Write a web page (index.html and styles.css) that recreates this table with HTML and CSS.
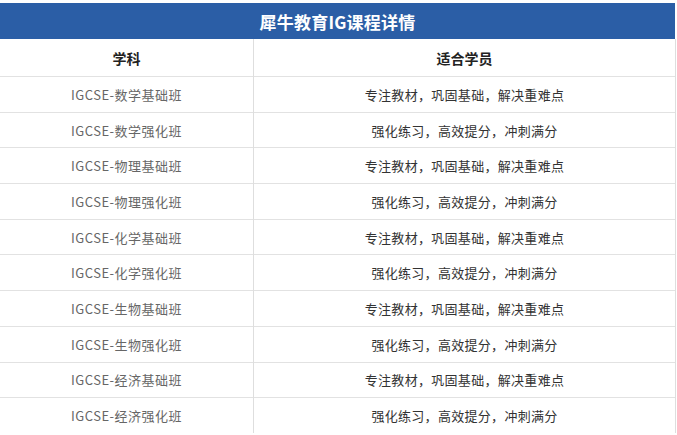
FILE: index.html
```html
<!DOCTYPE html>
<html lang="zh">
<head>
<meta charset="utf-8">
<title>犀牛教育IG课程详情</title>
<link rel="stylesheet" href="styles.css">
</head>
<body>
<div class="sheet">
  <div class="title">犀牛教育IG课程详情</div>
  <table class="grid">
    <thead>
      <tr class="head"><th class="c1">学科</th><th class="c2">适合学员</th></tr>
    </thead>
    <tbody>
      <tr><td class="c1">IGCSE-数学基础班</td><td class="c2">专注教材，巩固基础，解决重难点</td></tr>
      <tr><td class="c1">IGCSE-数学强化班</td><td class="c2">强化练习，高效提分，冲刺满分</td></tr>
      <tr><td class="c1">IGCSE-物理基础班</td><td class="c2">专注教材，巩固基础，解决重难点</td></tr>
      <tr><td class="c1">IGCSE-物理强化班</td><td class="c2">强化练习，高效提分，冲刺满分</td></tr>
      <tr><td class="c1">IGCSE-化学基础班</td><td class="c2">专注教材，巩固基础，解决重难点</td></tr>
      <tr><td class="c1">IGCSE-化学强化班</td><td class="c2">强化练习，高效提分，冲刺满分</td></tr>
      <tr><td class="c1">IGCSE-生物基础班</td><td class="c2">专注教材，巩固基础，解决重难点</td></tr>
      <tr><td class="c1">IGCSE-生物强化班</td><td class="c2">强化练习，高效提分，冲刺满分</td></tr>
      <tr><td class="c1">IGCSE-经济基础班</td><td class="c2">专注教材，巩固基础，解决重难点</td></tr>
      <tr><td class="c1">IGCSE-经济强化班</td><td class="c2">强化练习，高效提分，冲刺满分</td></tr>
    </tbody>
  </table>
</div>
</body>
</html>
```
FILE: styles.css
```css
html, body {
  margin: 0;
  padding: 0;
  background: #ffffff;
}
body {
  font-family: "Noto Sans CJK SC", "Noto Sans", sans-serif;
  overflow: hidden;
}
.sheet {
  width: 676px;
  padding-top: 3px;
}
.title {
  height: 36px;
  width: 675px;
  background: #2b5ea6;
  color: #ffffff;
  font-weight: bold;
  font-size: 17px;
  display: flex;
  align-items: center;
  justify-content: center;
  letter-spacing: 0.2px;
}
.grid {
  border-collapse: collapse;
  width: 676px;
  table-layout: fixed;
}
.grid th, .grid td {
  border-top: 1px solid #e2e2e2;
  border-right: 1px solid #dedede;
  padding: 0;
  text-align: center;
  vertical-align: middle;
}
.grid .c1 { width: 253px; }
.grid th {
  height: 37px;
  border-top: none;
  font-size: 14px;
  font-weight: bold;
  color: #222;
}
.grid td {
  height: 34.7px;
  font-size: 13px;
}
.grid td.c1 {
  color: #666;
  letter-spacing: 0.5px;
}
.grid td.c2 {
  color: #333;
  letter-spacing: 0.3px;
}
```
